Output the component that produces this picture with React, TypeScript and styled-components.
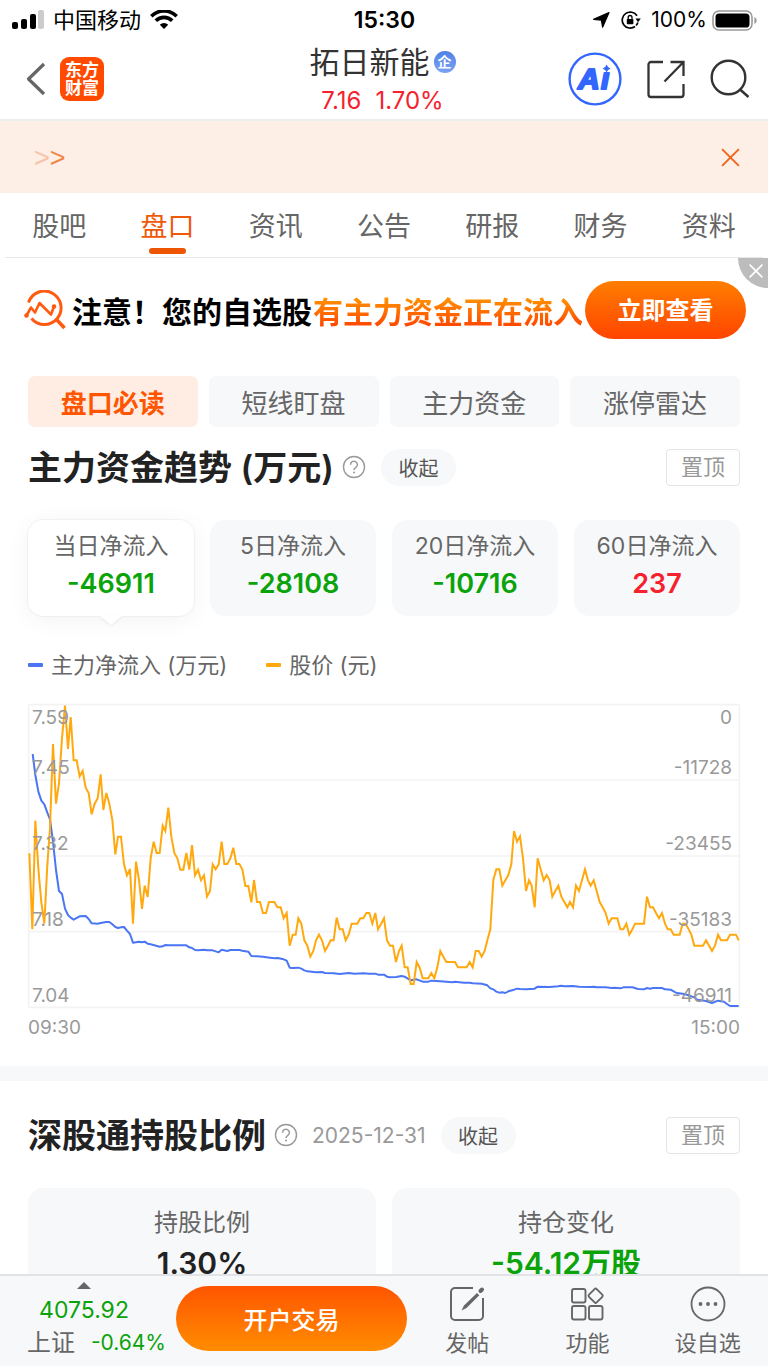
import React from 'react';
import styled, { createGlobalStyle, css } from 'styled-components';

const GlobalStyle = createGlobalStyle`
  *, *::before, *::after { box-sizing: border-box; }
  body {
    margin: 0;
    background: #fff;
    color: #222;
    font-family: Inter, "Noto Sans CJK SC", sans-serif;
    font-size: 22px;
  }
  button { font: inherit; color: inherit; border: 0; padding: 0; background: none; cursor: pointer; }
  a { color: inherit; text-decoration: none; }
  h1, h2, p, dl, dd, dt { margin: 0; font-weight: inherit; font-size: inherit; }
  svg { display: block; flex: none; }
`;

const GREEN = '#0aa30a';
const RED = '#f5222d';
const ORANGE = '#ff5500';

const Page = styled.div`
  height: 100vh;
  display: flex;
  flex-direction: column;
`;

/* ---------- status bar ---------- */

const StatusBar = styled.div`
  flex: none;
  height: 40px;
  padding: 0 11px 0 12px;
  display: grid;
  grid-template-columns: 1fr auto 1fr;
  align-items: center;
  color: #000;
  line-height: 40px;
`;

const StatusGroup = styled.div<{ $end?: boolean }>`
  display: flex;
  align-items: center;
  gap: ${(p) => (p.$end ? '0' : '9px')};
  justify-content: ${(p) => (p.$end ? 'flex-end' : 'flex-start')};
`;

const Clock = styled.time`
  font-size: 23px;
  font-weight: 600;
`;

const StatusIcons = styled.span`
  display: flex;
  align-items: center;
  gap: 11px;
`;

const BatteryText = styled.span`
  font-size: 21px;
  margin: 0 5px 0 10px;
`;

/* ---------- header ---------- */

const Header = styled.header`
  flex: none;
  height: 81px;
  padding: 0 18px 3px 24px;
  display: grid;
  grid-template-columns: 1fr auto 1fr;
  align-items: center;
  border-bottom: 2px solid #eceded;
`;

const HeaderSide = styled.div<{ $end?: boolean }>`
  display: flex;
  align-items: center;
  gap: ${(p) => (p.$end ? '25px' : '12px')};
  justify-content: ${(p) => (p.$end ? 'flex-end' : 'flex-start')};
`;

const Brand = styled.a`
  width: 44px;
  height: 44px;
  padding: 4px 5px;
  border-radius: 9px;
  background: #ff4a00;
  color: #fff;
  font-size: 17px;
  font-weight: 700;
  line-height: 18px;
  text-align: center;
`;

const StockTitle = styled.div`
  display: flex;
  flex-direction: column;
  align-items: center;
  padding-right: 9px;
`;

const StockName = styled.h1`
  display: flex;
  align-items: center;
  gap: 4px;
  font-size: 30px;
  line-height: 44px;
  color: #333;
`;

const CorpBadge = styled.span`
  width: 22px;
  height: 22px;
  border-radius: 50%;
  background: linear-gradient(#4f80e6, #7aa4f2);
  color: #fff;
  font-size: 14px;
  font-weight: 700;
  line-height: 21px;
  text-align: center;
`;

const Quote = styled.p`
  display: flex;
  gap: 14px;
  font-size: 24px;
  line-height: 34px;
  color: ${RED};
`;

/* ---------- notice and tabs ---------- */

const Notice = styled.div`
  height: 72px;
  padding: 0 27px 0 34px;
  display: flex;
  align-items: center;
  justify-content: space-between;
  background: #fdeee6;
`;

const Arrows = styled.span`
  padding-top: 2px;
  font-family: "Liberation Sans", sans-serif;
  font-size: 27px;
  line-height: 30px;
  color: #ef8649;
`;

const FaintArrow = styled.span`
  color: #f8c3a6;
`;

const Tabs = styled.nav`
  height: 65px;
  margin: 0 5px;
  display: grid;
  grid-template-columns: repeat(7, 1fr);
  border-bottom: 1px solid #e6e6e6;
`;

const Tab = styled.a<{ $active?: boolean }>`
  display: flex;
  flex-direction: column;
  align-items: center;
  font-size: 27px;
  line-height: 40px;
  padding-top: 14px;
  color: ${(p) => (p.$active ? '#f0580a' : '#666')};
  ${(p) =>
    p.$active &&
    css`
      &::after {
        content: '';
        width: 37px;
        height: 6px;
        margin-top: 1px;
        border-radius: 3px;
        background: #ee5500;
      }
    `}
`;

/* ---------- promotion ---------- */

const Promo = styled.aside`
  position: relative;
  height: 103px;
  padding: 0 22px 0 24px;
  display: flex;
  align-items: center;
`;

const PromoText = styled.p`
  flex: 1;
  display: flex;
  gap: 1px;
  margin-left: 5px;
  padding-top: 4px;
  font-size: 30px;
  font-weight: 700;
  line-height: 44px;
  color: #000;
  white-space: nowrap;
`;

const Hot = styled.span`
  background: linear-gradient(#ff9000 20%, #ff4a00 80%);
  background-clip: text;
  -webkit-background-clip: text;
  color: transparent;
`;

const PromoButton = styled.button`
  flex: none;
  width: 161px;
  height: 58px;
  padding-bottom: 3px;
  border-radius: 29px;
  background: linear-gradient(#ff7e00, #ff4400);
  color: #fff;
  font-size: 24px;
  font-weight: 700;
`;

const PromoClose = styled.button`
  position: absolute;
  top: 0;
  right: 0;
  width: 30px;
  height: 30px;
  padding: 4px 4px 8px 10px;
  border-radius: 0 0 0 30px;
  background: #bcbcbc;
`;

/* ---------- sections ---------- */

const Content = styled.main`
  flex: 1;
  min-height: 0;
  overflow: hidden;
`;

const Section = styled.section`
  padding: 0 28px;
`;

const Chips = styled.div`
  display: grid;
  grid-template-columns: repeat(4, 1fr);
  gap: 11px;
  padding: 15px 28px 0;
`;

const Chip = styled.button<{ $active?: boolean }>`
  height: 51px;
  padding-bottom: 1px;
  border-radius: 7px;
  font-size: 26px;
  background: ${(p) => (p.$active ? '#ffede4' : '#f7f8fa')};
  color: ${(p) => (p.$active ? ORANGE : '#666')};
  font-weight: ${(p) => (p.$active ? 700 : 400)};
`;

const SectionHead = styled.div<{ $second?: boolean }>`
  display: flex;
  align-items: center;
  height: 48px;
  margin-top: ${(p) => (p.$second ? '30px' : '16px')};
`;

const SectionTitle = styled.h2`
  padding-top: 2px;
  font-size: 34px;
  font-weight: 600;
  line-height: 48px;
`;

const HelpButton = styled.button`
  margin-left: 8px;
`;

const SectionDate = styled.time`
  margin-left: 14px;
  font-size: 21px;
  color: #999;
`;

const FoldButton = styled.button`
  width: 75px;
  height: 37px;
  margin-left: 15px;
  border-radius: 19px;
  background: #f7f8fa;
  font-size: 20px;
  color: #555;
`;

const PinButton = styled.button`
  width: 74px;
  height: 37px;
  margin-left: auto;
  border: 1px solid #e4e4e4;
  border-radius: 4px;
  font-size: 22px;
  line-height: 30px;
  color: #999;
`;

const PeriodGrid = styled.div`
  display: grid;
  grid-template-columns: repeat(4, 1fr);
  gap: 16px;
  margin-top: 29px;
`;

const Period = styled.button<{ $active?: boolean }>`
  position: relative;
  height: 96px;
  padding-bottom: 6px;
  display: flex;
  flex-direction: column;
  align-items: center;
  justify-content: center;
  border-radius: 15px;
  background: #f7f8fa;
  ${(p) =>
    p.$active &&
    css`
      background: #fff;
      box-shadow: 0 0 1px 1px rgba(0, 0, 0, 0.04), 0 4px 24px rgba(0, 0, 0, 0.05);
      &::after {
        content: '';
        position: absolute;
        top: 100%;
        left: 50%;
        margin-left: -11px;
        border: 11px solid transparent;
        border-top: 9px solid #fff;
        border-bottom: 0;
        filter: drop-shadow(0 1px 1px rgba(0, 0, 0, 0.08));
      }
    `}
`;

const PeriodName = styled.span`
  font-size: 23px;
  line-height: 38px;
  color: #666;
`;

const PeriodValue = styled.span<{ $up?: boolean }>`
  font-size: 27px;
  font-weight: 600;
  line-height: 38px;
  color: ${(p) => (p.$up ? RED : GREEN)};
`;

const Legend = styled.div`
  display: flex;
  gap: 39px;
  margin-top: 32px;
  line-height: 34px;
  color: #666;
`;

const LegendItem = styled.span<{ $color: string }>`
  display: flex;
  align-items: center;
  gap: 8px;
  &::before {
    content: '';
    width: 15px;
    height: 4px;
    border-radius: 1px;
    background: ${(p) => p.$color};
  }
`;

/* ---------- chart ---------- */

const ChartBox = styled.div`
  position: relative;
  height: 304px;
  margin-top: 22px;
`;

const ChartDrawing = styled.svg`
  width: 100%;
  height: 100%;
  overflow: visible;
`;

const Scale = styled.div<{ $right?: boolean }>`
  position: absolute;
  inset: 0 auto 0 4px;
  display: grid;
  grid-template-rows: repeat(4, 1fr);
  font-size: 19px;
  line-height: 24px;
  color: #999;
  ${(p) =>
    p.$right &&
    css`
      inset: 0 8px 0 auto;
      text-align: right;
    `}
`;

const Band = styled.div`
  display: flex;
  flex-direction: column;
  justify-content: flex-end;
`;

const FirstBand = styled(Band)`
  justify-content: space-between;
  padding-top: 2px;
`;

const TimeAxis = styled.div`
  display: flex;
  justify-content: space-between;
  margin-top: 8px;
  font-size: 19px;
  line-height: 24px;
  color: #999;
`;

const Divider = styled.div`
  height: 15px;
  margin-top: 26px;
  background: #f7f8fa;
`;

/* ---------- holdings ---------- */

const HoldingGrid = styled.dl`
  display: grid;
  grid-template-columns: repeat(2, 1fr);
  gap: 16px;
  margin-top: 29px;
`;

const Holding = styled.div`
  height: 130px;
  padding-top: 15px;
  border-radius: 15px;
  background: #f7f8fa;
  text-align: center;
`;

const HoldingName = styled.dt`
  font-size: 24px;
  line-height: 40px;
  color: #666;
`;

const HoldingValue = styled.dd<{ $down?: boolean }>`
  font-size: 30px;
  font-weight: 600;
  line-height: 40px;
  color: ${(p) => (p.$down ? GREEN : '#222')};
`;

/* ---------- bottom bar ---------- */

const BottomBar = styled.footer`
  flex: none;
  height: 92px;
  padding-top: 6px;
  display: grid;
  grid-template-columns: 176px 231px repeat(3, 1fr);
  align-items: start;
  border-top: 2px solid #e2e3e6;
  background: #f7f8fa;
`;

const IndexQuote = styled.a`
  padding: 0 10px 0 27px;
  display: flex;
  flex-direction: column;
  color: ${GREEN};
`;

const IndexTop = styled.span`
  width: 114px;
  display: flex;
  flex-direction: column;
  align-items: center;
  gap: 5px;
  font-size: 23px;
  line-height: 32px;
`;

const IndexRow = styled.span`
  display: flex;
  align-items: center;
  justify-content: space-between;
  font-size: 21px;
  line-height: 34px;
`;

const IndexName = styled.span`
  font-size: 24px;
  color: #666;
`;

const TradeButton = styled.button`
  height: 65px;
  margin-top: 4px;
  padding-bottom: 1px;
  border-radius: 33px;
  background: linear-gradient(#ff5500, #ff8c00);
  color: #fff;
  font-size: 24px;
  font-weight: 500;
`;

const Action = styled.button`
  display: flex;
  flex-direction: column;
  align-items: center;
  gap: 3px;
  margin-top: 4px;
  font-size: 22px;
  line-height: 36px;
  color: #666;
`;

/* ---------- icons ---------- */

const SignalIcon = () => (
  <svg width="32" height="20" viewBox="0 0 32 20">
    <rect x="0" y="12" width="6" height="7" rx="2" />
    <rect x="9" y="9" width="6" height="10" rx="2" />
    <rect x="18" y="4" width="6" height="15" rx="2" />
    <rect x="26" y="0" width="6" height="19" rx="2" fill="#ccc" />
  </svg>
);

const WifiIcon = () => (
  <svg width="28" height="20" viewBox="0 0 28 20" fill="none" stroke="#000" strokeWidth="3.6">
    <path d="M1.3 6.200a18 18 0 0 1 25.4 0" />
    <path d="M5.8 10.800a11.6 11.6 0 0 1 16.4 0" />
    <path d="M14 19l-4.2-4.300a6 6 0 0 1 8.4 0z" fill="#000" stroke="none" />
  </svg>
);

const LocationIcon = () => (
  <svg width="17" height="16" viewBox="0 0 17 16">
    <path d="M16 .6 9.600 15.200 8.400 8.200.6 7.300z" stroke="#000" strokeWidth="1.200" strokeLinejoin="round" />
  </svg>
);

const RotationLockIcon = () => (
  <svg width="20" height="18" viewBox="0 0 20 18" fill="none" stroke="#000" strokeWidth="1.7">
    <path d="M16 4.800A8 8 0 1 0 14 15.500" />
    <path d="M16.800 11.500a8 8 0 0 1-1.700 3" />
    <path d="M14.400 7.500h5.400l-2.700 3.800z" fill="#000" stroke="none" />
    <rect x="5.800" y="8" width="6.6" height="5.2" rx="0.8" fill="#000" stroke="none" />
    <path d="M7.200 8V6.400a1.900 1.900 0 0 1 3.800 0V8" strokeWidth="1.3" />
  </svg>
);

const BatteryIcon = () => (
  <svg width="45" height="21" viewBox="0 0 45 21">
    <rect x="1" y="1" width="39" height="19" rx="6" fill="none" stroke="#999" strokeWidth="1.6" />
    <rect x="3.5" y="3.5" width="34" height="14" rx="3.6" />
    <path d="M42.4 7c3 1.4 3 5.6 0 7z" fill="#999" />
  </svg>
);

const BackIcon = () => (
  <svg width="24" height="34" viewBox="0 0 24 34" fill="none" stroke="#666" strokeWidth="3.2">
    <path d="M20 2 4.500 17 20 32" strokeLinejoin="round" />
  </svg>
);

const AiIcon = () => (
  <svg width="54" height="54" viewBox="0 0 54 54">
    <circle cx="27" cy="27" r="25.4" fill="none" stroke="#3366ff" strokeWidth="2.4" />
    <g
      fill="#3366ff"
      stroke="#3366ff"
      strokeWidth="2.200"
      strokeLinejoin="round"
      fontFamily="Liberation Sans, sans-serif"
      fontSize="30"
      fontWeight="700"
      fontStyle="italic"
    >
      <text x="10" y="37">A</text>
      <text x="33" y="37">ı</text>
    </g>
    <path d="M38.600 12.500q.9 3.100 4 4-3.100.9-4 4-.9-3.100-4-4 3.100-.9 4-4z" fill="#3366ff" />
  </svg>
);

const ShareIcon = () => (
  <svg width="38" height="39" viewBox="0 0 38 39" fill="none" stroke="#333" strokeWidth="2.300">
    <path d="M16 2H4a2.500 2.500 0 0 0-2.500 2.500v30A2.500 2.500 0 0 0 4 37h30a2.500 2.500 0 0 0 2.500-2.500V24" />
    <path d="M23.500 2h13v14M36 2.500 17.500 21.500" />
  </svg>
);

const SearchIcon = () => (
  <svg width="40" height="40" viewBox="0 0 40 40" fill="none" stroke="#333" strokeWidth="2.400">
    <circle cx="18.500" cy="18.500" r="16.800" />
    <path d="M29.500 30 38.500 38" />
  </svg>
);

const CloseIcon = ({ size, color, width }: { size: number; color: string; width: number }) => (
  <svg width={size} height={size} viewBox="0 0 20 20" fill="none" stroke={color} strokeWidth={width}>
    <path d="M2 2 18 18M18 2 2 18" />
  </svg>
);

const TrendIcon = () => (
  <svg width="43" height="40" viewBox="0 0 43 40" fill="none" stroke="#ff5a10" strokeWidth="3">
    <path d="M4.500 12.500A16.700 16.700 0 1 1 7.500 28.500" />
    <path d="M32.500 29.500 40.500 38" strokeWidth="3.600" />
    <path d="M2.500 25.500 7 17.500l4 5 4.500-9.500 11.500 11.500 3-8" strokeWidth="2.600" strokeLinejoin="round" />
    <g fill="#ff5a10" stroke="none">
      <circle cx="2.500" cy="25.500" r="2.300" />
      <circle cx="30" cy="16.500" r="2.300" />
    </g>
  </svg>
);

const HelpIcon = () => (
  <svg width="24" height="24" viewBox="0 0 24 24" fill="none" stroke="#999" strokeWidth="1.400">
    <circle cx="12" cy="12" r="10.500" />
    <path d="M8.600 9.700a3.400 3.400 0 1 1 5.300 2.700c-1.300.9-1.900 1.400-1.900 2.600" strokeWidth="1.500" />
    <circle cx="12" cy="17.500" r="1" fill="#999" stroke="none" />
  </svg>
);

const PostIcon = () => (
  <svg width="36" height="36" viewBox="0 0 36 36" fill="none" stroke="#666" strokeWidth="2">
    <path d="M24 2H6a4 4 0 0 0-4 4v24a4 4 0 0 0 4 4h24a4 4 0 0 0 4-4V12" />
    <path d="M12.500 24.500 15 19.500 28 7l2.300 2.300L17.500 22z" fill="#666" stroke="none" />
    <path d="M31.500 5 33 3.500" strokeWidth="4" strokeLinecap="round" />
  </svg>
);

const GridIcon = () => (
  <svg width="36" height="36" viewBox="0 0 36 36" fill="none" stroke="#666" strokeWidth="1.900">
    <rect x="3" y="3" width="13.500" height="13.500" rx="2" />
    <rect x="3" y="20" width="13.500" height="13.500" rx="2" />
    <rect x="20" y="20" width="13.500" height="13.500" rx="2" />
    <path d="M25.600 3.100 20 8.700a1.500 1.500 0 0 0 0 2.100l5.600 5.600a1.500 1.500 0 0 0 2.100 0l5.600-5.600a1.500 1.500 0 0 0 0-2.100l-5.600-5.600a1.500 1.500 0 0 0-2.100 0z" />
  </svg>
);

const MoreIcon = () => (
  <svg width="36" height="36" viewBox="0 0 36 36" fill="#666">
    <circle cx="18" cy="18" r="16.500" fill="none" stroke="#666" strokeWidth="1.800" />
    <circle cx="10.500" cy="18" r="1.900" />
    <circle cx="18" cy="18" r="1.900" />
    <circle cx="25.500" cy="18" r="1.900" />
  </svg>
);

const UpIcon = () => (
  <svg width="14" height="7" viewBox="0 0 14 7">
    <path d="M0 7 7 0l7 7z" fill="#666" />
  </svg>
);

/* ---------- chart data: [start of the stretch, points from there] ---------- */

type Stretch = [number, string];

const priceLine: Stretch[] = [
  [0, '28,475 37,703 46,377 55,520 64,622 73,685 82,510 90,400 99,147 108,326 117,265 126,130 135,32 144,162 152,66 161,196 170,196 179,244 188,228 197,278 206,294 215,358 224,326 233,310 242,238 250,345 259,294 268,326 277,375 286,478 294,425 303,425 312,508 321,541 330,522 339,686 348,500 357,555 366,642 374,572 383,606 392,490 401,440 410,474 419,474 428,392 436,408 445,338 454,425 463,474 472,490 481,524 490,524 499,474 508,524 516,450 525,541 534,524 543,556 552,541 561,605 570,588 578,508 587,523 596,508 605,440 613,507 622,507 631,490 640,458 649,507 658,507 667,523 676,573 685,573 694,622 702,555 711,621 720,621'],
  [720, '9,654 18,654 27,621 43,621 52,637 62,637 71,670 80,654 89,752 98,719 107,719 115,670 124,686 133,736 142,752 151,785 160,768 168,736 177,719 186,736 195,768 204,752 212,736 221,736 230,668 239,703 248,703 257,736 266,719 275,686 292,686 301,670 310,670 319,654 328,654 337,686 346,654 354,703 363,687 372,670 381,736 390,752 399,752 408,801 417,768 425,752 434,817 443,817 452,867 461,867 470,801 479,818 488,850 505,850 514,834 523,850 532,817 541,768 550,785 559,801 585,801 594,817 620,817 629,801 638,817 647,768 656,768 665,785 674,768 682,736 691,703 700,555 709,523 718,523 727,572 736,556 745,540 754,508'],
  [1440, '42,408 51,440 60,424 69,490 78,588 87,556 95,572 104,637 113,490 122,523 131,556 140,540 149,556 157,605 166,588 175,572 184,605 193,621 202,637 210,621 219,637 228,572 237,588 246,556 255,523 264,556 272,572 281,556 290,588 299,621 308,637 317,654 326,686 335,670 352,670 361,703 370,703 379,686 388,719 397,703 405,686 432,686 441,605 450,637 459,637 468,654 477,670 486,654 495,686 503,703 512,703 521,719 539,719 548,686 557,686 566,703 574,719 583,752 609,752 618,736 636,768 645,752 654,719 663,736 681,736 690,719 708,719 716,736'],
];

const flowLine: Stretch[] = [
  [0, '38,177 46,240 55,290 64,317 73,328 82,353 90,373 99,440 108,525 117,588 126,597 135,641 144,660 152,668 161,674 179,664 197,663 206,672 215,685 233,686 242,684 259,681 268,681 277,688 286,696 294,699 303,697 312,696 321,707 330,717 339,743 357,740 366,742 374,740 383,746 392,748 419,755 428,754 436,750 445,751 499,751 508,757 516,759 525,765 534,766 552,764 561,766 578,766 596,772 605,764 622,768 631,765 658,765 667,767 685,770 694,783 711,784 729,785'],
  [720, '30,788 45,790 53,789 71,793 80,797 89,818 98,819 115,818 124,821 133,826 142,829 168,832 186,831 195,834 221,835 239,837 266,834 284,836 310,835 328,836 346,836 354,839 372,839 381,845 390,847 408,846 425,843 434,845 452,856 470,853 488,860 505,860 514,857 541,859 577,862 585,860 612,863 629,863 638,865 665,866 682,871 691,880 700,883 709,890 718,893 727,892 736,894 745,889'],
  [1440, '42,884 51,881 60,882 78,883 104,881 113,875 149,876 175,874 184,872 193,874 219,873 237,875 272,876 281,875 290,877 317,877 335,879 343,878 361,880 370,877 397,877 414,882 432,883 441,879 450,881 459,879 486,879 495,883 512,884 521,889 530,894 548,896 566,901 583,907 592,914 618,918 636,924 654,917 672,920 681,927 690,933 716,933'],
];

const toPoints = (line: Stretch[]) =>
  line
    .map(([start, points]) =>
      points
        .split(' ')
        .map((point) => {
          const [x, y] = point.split(',').map(Number);
          return `${x + start},${y}`;
        })
        .join(' '),
    )
    .join(' ');

const ScaleLabels = ({ labels, right }: { labels: string[]; right?: boolean }) => (
  <Scale $right={right}>
    <FirstBand>
      <span>{labels[0]}</span>
      <span>{labels[1]}</span>
    </FirstBand>
    {labels.slice(2).map((label) => (
      <Band key={label}>{label}</Band>
    ))}
  </Scale>
);

const Chart = () => (
  <ChartBox>
    <ChartDrawing viewBox="24 27 2136 912" preserveAspectRatio="none" fill="none" role="img" aria-label="主力资金趋势">
      <g stroke="#f3f3f4" strokeWidth="5">
        {[29, 255, 483, 710, 937].map((y) => (
          <path key={y} d={`M24 ${y}H2160`} />
        ))}
        <path d="M26 29V937M2158 29V937" />
      </g>
      <polyline points={toPoints(flowLine)} stroke="#4a76f5" strokeWidth="6" strokeLinejoin="round" />
      <polyline points={toPoints(priceLine)} stroke="#ffa90f" strokeWidth="6" />
    </ChartDrawing>
    <ScaleLabels labels={['7.59', '7.45', '7.32', '7.18', '7.04']} />
    <ScaleLabels right labels={['0', '-11728', '-23455', '-35183', '-46911']} />
  </ChartBox>
);

/* ---------- page ---------- */

const tabs = ['股吧', '盘口', '资讯', '公告', '研报', '财务', '资料'];
const chips = ['盘口必读', '短线盯盘', '主力资金', '涨停雷达'];
const periods = [
  { name: '当日净流入', value: '-46911' },
  { name: '5日净流入', value: '-28108' },
  { name: '20日净流入', value: '-10716' },
  { name: '60日净流入', value: '237' },
];

export default function App() {
  return (
    <Page>
      <GlobalStyle />
      <StatusBar>
        <StatusGroup>
          <SignalIcon />
          <span>中国移动</span>
          <WifiIcon />
        </StatusGroup>
        <Clock>15:30</Clock>
        <StatusGroup $end>
          <StatusIcons>
            <LocationIcon />
            <RotationLockIcon />
          </StatusIcons>
          <BatteryText>100%</BatteryText>
          <BatteryIcon />
        </StatusGroup>
      </StatusBar>

      <Header>
        <HeaderSide>
          <button aria-label="返回"><BackIcon /></button>
          <Brand href="#">东方财富</Brand>
        </HeaderSide>
        <StockTitle>
          <StockName>
            拓日新能<CorpBadge>企</CorpBadge>
          </StockName>
          <Quote>
            <span>7.16</span>
            <span>1.70%</span>
          </Quote>
        </StockTitle>
        <HeaderSide $end>
          <button aria-label="智能助手"><AiIcon /></button>
          <button aria-label="分享"><ShareIcon /></button>
          <button aria-label="搜索"><SearchIcon /></button>
        </HeaderSide>
      </Header>

      <Content>
        <Notice>
          <Arrows>
            <FaintArrow>&gt;</FaintArrow>&gt;
          </Arrows>
          <button aria-label="关闭通知"><CloseIcon size={21} color="#f0651a" width={1.8} /></button>
        </Notice>

        <Tabs>
          {tabs.map((tab) => (
            <Tab key={tab} href="#" $active={tab === '盘口'}>{tab}</Tab>
          ))}
        </Tabs>

        <Promo>
          <TrendIcon />
          <PromoText>
            <span>注意！您的自选股</span>
            <Hot>有主力资金正在流入</Hot>
          </PromoText>
          <PromoButton>立即查看</PromoButton>
          <PromoClose aria-label="关闭广告"><CloseIcon size={16} color="#fff" width={2} /></PromoClose>
        </Promo>

        <Chips>
          {chips.map((chip, i) => (
            <Chip key={chip} $active={i === 0}>{chip}</Chip>
          ))}
        </Chips>

        <Section>
          <SectionHead>
            <SectionTitle>主力资金趋势 (万元)</SectionTitle>
            <HelpButton aria-label="说明"><HelpIcon /></HelpButton>
            <FoldButton>收起</FoldButton>
            <PinButton>置顶</PinButton>
          </SectionHead>
          <PeriodGrid>
            {periods.map(({ name, value }, i) => (
              <Period key={name} $active={i === 0}>
                <PeriodName>{name}</PeriodName>
                <PeriodValue $up={!value.startsWith('-')}>{value}</PeriodValue>
              </Period>
            ))}
          </PeriodGrid>
          <Legend>
            <LegendItem $color="#4a76f5">主力净流入 (万元)</LegendItem>
            <LegendItem $color="#ffa90f">股价 (元)</LegendItem>
          </Legend>
          <Chart />
          <TimeAxis>
            <span>09:30</span>
            <span>15:00</span>
          </TimeAxis>
        </Section>

        <Divider />

        <Section>
          <SectionHead $second>
            <SectionTitle>深股通持股比例</SectionTitle>
            <HelpButton aria-label="说明"><HelpIcon /></HelpButton>
            <SectionDate>2025-12-31</SectionDate>
            <FoldButton>收起</FoldButton>
            <PinButton>置顶</PinButton>
          </SectionHead>
          <HoldingGrid>
            <Holding>
              <HoldingName>持股比例</HoldingName>
              <HoldingValue>1.30%</HoldingValue>
            </Holding>
            <Holding>
              <HoldingName>持仓变化</HoldingName>
              <HoldingValue $down>-54.12万股</HoldingValue>
            </Holding>
          </HoldingGrid>
        </Section>
      </Content>

      <BottomBar>
        <IndexQuote href="#">
          <IndexTop>
            <UpIcon />
            4075.92
          </IndexTop>
          <IndexRow>
            <IndexName>上证</IndexName>
            -0.64%
          </IndexRow>
        </IndexQuote>
        <TradeButton>开户交易</TradeButton>
        <Action><PostIcon />发帖</Action>
        <Action><GridIcon />功能</Action>
        <Action><MoreIcon />设自选</Action>
      </BottomBar>
    </Page>
  );
}
